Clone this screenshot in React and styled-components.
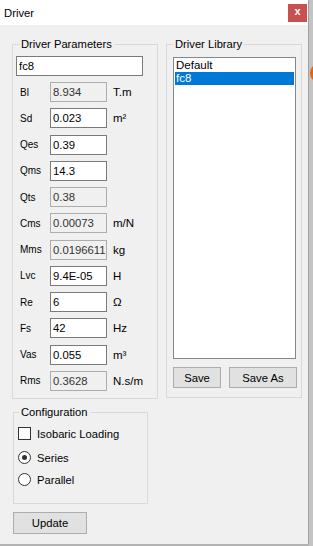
import React from 'react';
import styled, { createGlobalStyle } from 'styled-components';

const Global = createGlobalStyle`
  html, body { margin: 0; padding: 0; background: #b3b3b3; }
  body { font-family: "Liberation Sans", Arial, sans-serif; color: #000; }
  * { box-sizing: border-box; }
`;

const Screen = styled.div`
  display: flex;
  width: 313px;
  height: 546px;
  overflow: hidden;
`;

const Window = styled.div`
  width: 309px;
  height: 544px;
  background: #f0f0f0;
  display: flex;
  flex-direction: column;
  border-right: 1px solid #a0a0a0;
  flex-shrink: 0;
`;

const Strip = styled.div`
  flex: 1;
  position: relative;
  overflow: hidden;
  background: #c4c4c4;
`;

const OrangeDot = styled.div`
  position: absolute;
  left: 1px;
  top: 63px;
  width: 20px;
  height: 20px;
  border-radius: 50%;
  background: #e0621c;
`;

const TitleBar = styled.div`
  height: 25px;
  flex-shrink: 0;
  background: #fff;
  display: flex;
  align-items: center;
  justify-content: space-between;
  padding: 0 1px 0 4px;
`;

const Title = styled.span`
  font-size: 11.3px;
`;

const CloseButton = styled.div`
  width: 19px;
  height: 18px;
  background: #c75050;
  color: #fff;
  display: flex;
  align-items: center;
  justify-content: center;
  font-size: 11px;
  font-weight: bold;
  line-height: 1;
  padding-bottom: 2px;
`;

const Body = styled.div`
  flex: 1;
  display: flex;
  flex-direction: column;
  align-items: flex-start;
  padding: 11px 0 0 12px;
`;

const TopRow = styled.div`
  display: flex;
  gap: 8px;
`;

const Group = styled.fieldset`
  margin: ${p => p.$margin || '0'};
  min-width: 0;
  border: 1px solid #d9d9d9;
  border-radius: 0;
  width: ${p => p.$w}px;
  height: ${p => p.$h}px;
  padding: ${p => p.$pad};
`;

const Legend = styled.legend`
  padding: 0 2px;
  margin-left: ${p => p.$ml}px;
  font-size: 11.2px;
  line-height: 16px;
`;

const Column = styled.div`
  display: flex;
  flex-direction: column;
  align-items: flex-start;
  height: 100%;
`;

const TextBox = styled.div`
  width: ${p => p.$w}px;
  height: 20px;
  background: ${p => (p.$ro ? '#f0f0f0' : '#fff')};
  border: 1px solid ${p => (p.$ro ? '#adadad' : '#7a7a7a')};
  font-size: 11.3px;
  color: ${p => (p.$ro ? '#333' : '#000')};
  display: flex;
  align-items: center;
  padding-left: 2px;
  white-space: nowrap;
  overflow: hidden;
`;

const ParamGrid = styled.div`
  display: grid;
  grid-template-columns: 34px 57px auto;
  grid-auto-rows: 20px;
  row-gap: 6.27px;
  align-items: center;
  margin-top: 6px;
`;

const ParamLabel = styled.span`
  padding-left: 4px;
  font-size: 10px;
`;

const Unit = styled.span`
  padding-left: 6px;
  font-size: 11.5px;
  white-space: nowrap;
`;

const ListBox = styled.div`
  width: 123px;
  height: 302px;
  background: #fff;
  border: 1px solid #828790;
  padding: 1px 1px;
  display: flex;
  flex-direction: column;
`;

const ListItem = styled.div`
  height: 13px;
  line-height: 13px;
  font-size: 11.5px;
  padding-left: 1px;
  background: ${p => (p.$sel ? '#0078d7' : 'transparent')};
  color: ${p => (p.$sel ? '#fff' : '#000')};
`;

const ButtonRow = styled.div`
  display: flex;
  gap: 8px;
  margin-top: 8px;
`;

const Button = styled.div`
  width: ${p => p.$w}px;
  height: ${p => p.$h || 21}px;
  margin: ${p => p.$margin || '0'};
  background: #e1e1e1;
  border: 1px solid #adadad;
  font-size: 11.3px;
  display: flex;
  align-items: center;
  justify-content: center;
`;

const OptionRow = styled.div`
  display: flex;
  align-items: center;
  gap: 6px;
  height: 13px;
  margin-top: ${p => p.$mt || 0}px;
  font-size: 11.2px;
`;

const CheckBox = styled.div`
  width: 13px;
  height: 13px;
  background: #fff;
  border: 1px solid #333;
`;

const Radio = styled.div`
  width: 13px;
  height: 13px;
  border-radius: 50%;
  background: #fff;
  border: 1px solid #333;
  display: flex;
  align-items: center;
  justify-content: center;
  &::after {
    content: '';
    width: 5px;
    height: 5px;
    border-radius: 50%;
    background: ${p => (p.$on ? '#333' : 'transparent')};
  }
`;

const params = [
  { l: 'Bl', v: '8.934', u: 'T.m', ro: true },
  { l: 'Sd', v: '0.023', u: 'm²' },
  { l: 'Qes', v: '0.39', u: '' },
  { l: 'Qms', v: '14.3', u: '' },
  { l: 'Qts', v: '0.38', u: '', ro: true },
  { l: 'Cms', v: '0.00073', u: 'm/N', ro: true },
  { l: 'Mms', v: '0.0196611', u: 'kg', ro: true },
  { l: 'Lvc', v: '9.4E-05', u: 'H' },
  { l: 'Re', v: '6', u: 'Ω' },
  { l: 'Fs', v: '42', u: 'Hz' },
  { l: 'Vas', v: '0.055', u: 'm³' },
  { l: 'Rms', v: '0.3628', u: 'N.s/m', ro: true },
];

export default function App() {
  return (
    <Screen>
      <Global />
      <Window>
        <TitleBar>
          <Title>Driver</Title>
          <CloseButton>x</CloseButton>
        </TitleBar>
        <Body>
          <TopRow>
            <Group $w={146} $h={363} $pad="4px 0 0 3px">
              <Legend $ml={3}>Driver Parameters</Legend>
              <Column>
                <TextBox $w={127}>fc8</TextBox>
                <ParamGrid>
                  {params.map(p => (
                    <React.Fragment key={p.l}>
                      <ParamLabel>{p.l}</ParamLabel>
                      <TextBox $w={57} $ro={p.ro}>{p.v}</TextBox>
                      <Unit>{p.u}</Unit>
                    </React.Fragment>
                  ))}
                </ParamGrid>
              </Column>
            </Group>
            <Group $w={136} $h={362} $pad="5px 5px 9px 6px">
              <Legend $ml={0}>Driver Library</Legend>
              <Column>
                <ListBox>
                  <ListItem>Default</ListItem>
                  <ListItem $sel>fc8</ListItem>
                </ListBox>
                <ButtonRow>
                  <Button $w={48}>Save</Button>
                  <Button $w={68}>Save As</Button>
                </ButtonRow>
              </Column>
            </Group>
          </TopRow>
          <Group $w={135} $h={100} $pad="7px 4px 0 4px" $margin="5px 0 0 1px">
            <Legend $ml={1}>Configuration</Legend>
            <Column>
              <OptionRow>
                <CheckBox />
                <span>Isobaric Loading</span>
              </OptionRow>
              <OptionRow $mt={11}>
                <Radio $on />
                <span>Series</span>
              </OptionRow>
              <OptionRow $mt={9}>
                <Radio />
                <span>Parallel</span>
              </OptionRow>
            </Column>
          </Group>
          <Button $w={74} $h={22} $margin="8px 0 0 1px">Update</Button>
        </Body>
      </Window>
      <Strip>
        <OrangeDot />
      </Strip>
    </Screen>
  );
}
